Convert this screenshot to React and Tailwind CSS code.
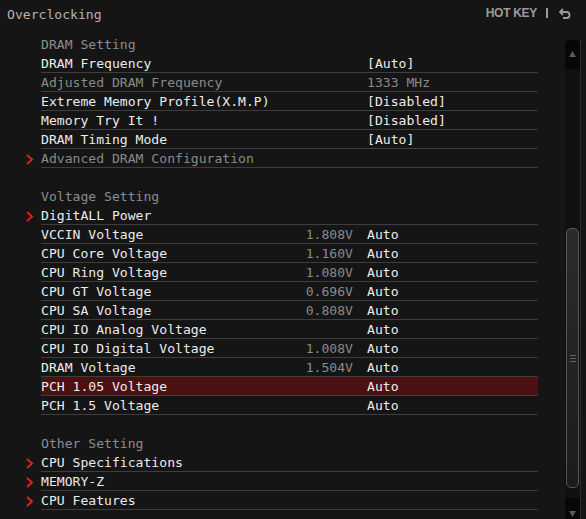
import React from "react";

const mono = { fontFamily: '"DejaVu Sans Mono", "Liberation Mono", monospace' };

function Arrow() {
  return (
    <svg width="8" height="11" viewBox="0 0 8 11" className="block">
      <path d="M1 1 L6 5.5 L1 10" fill="none" stroke="#e0201c" strokeWidth="2" />
    </svg>
  );
}

const rows = [
  { t: "title", label: "DRAM Setting" },
  { label: "DRAM Frequency", val: "[Auto]" },
  { label: "Adjusted DRAM Frequency", val: "1333 MHz", dim: true },
  { label: "Extreme Memory Profile(X.M.P)", val: "[Disabled]" },
  { label: "Memory Try It !", val: "[Disabled]" },
  { label: "DRAM Timing Mode", val: "[Auto]" },
  { label: "Advanced DRAM Configuration", dim: true, arrow: true },
  { t: "blank" },
  { t: "title", label: "Voltage Setting" },
  { label: "DigitALL Power", arrow: true },
  { label: "VCCIN Voltage", num: "1.808V", val: "Auto" },
  { label: "CPU Core Voltage", num: "1.160V", val: "Auto" },
  { label: "CPU Ring Voltage", num: "1.080V", val: "Auto" },
  { label: "CPU GT Voltage", num: "0.696V", val: "Auto" },
  { label: "CPU SA Voltage", num: "0.808V", val: "Auto" },
  { label: "CPU IO Analog Voltage", num: "", val: "Auto" },
  { label: "CPU IO Digital Voltage", num: "1.008V", val: "Auto" },
  { label: "DRAM Voltage", num: "1.504V", val: "Auto" },
  { label: "PCH 1.05 Voltage", num: "", val: "Auto", sel: true },
  { label: "PCH 1.5 Voltage", num: "", val: "Auto" },
  { t: "blank" },
  { t: "title", label: "Other Setting" },
  { label: "CPU Specifications", arrow: true },
  { label: "MEMORY-Z", arrow: true },
  { label: "CPU Features", arrow: true },
];

function Row({ r }) {
  if (r.t === "blank") return <div className="h-[19px]" />;
  if (r.t === "title")
    return (
      <div className="h-[19px] flex items-center pt-[1px] pl-[41px] text-[#8c8c8c]">{r.label}</div>
    );
  return (
    <div className="h-[19px] flex items-stretch">
      <div className="w-[41px] flex items-center justify-start pl-[26px] pt-[1px]">
        {r.arrow ? <Arrow /> : null}
      </div>
      <div
        className={`w-[497px] flex items-center pt-[1px] border-b border-[#3d3d3d] ${
          r.sel ? "bg-[#4c1012] border-t border-t-[#3d3d3d] -mt-px" : ""
        }`}
      >
        <div className={`w-[262px] ${r.dim ? "text-[#8a8a8a]" : "text-[#ececec]"}`}>{r.label}</div>
        <div className="w-[50px] text-right text-[#8a8a8a]">{r.num || ""}</div>
        <div className={`pl-[14px] ${r.dim ? "text-[#8a8a8a]" : "text-[#ececec]"}`}>{r.val || ""}</div>
      </div>
    </div>
  );
}

function Scrollbar() {
  return (
    <div className="w-[16px] mt-[40px] flex">
      <div className="w-[15px] flex flex-col bg-[#101010] rounded-t-[5px]">
        <div className="h-[29px] bg-[#070707] rounded-t-[5px] flex justify-center pt-[11px]">
          <svg width="7" height="6" viewBox="0 0 7 6"><path d="M3.5 0 L7 6 L0 6 Z" fill="#5a5a5a" /></svg>
        </div>
        <div className="h-[159px]" />
        <div className="h-[260px] mx-[1px] rounded-[5px] border border-[#555] bg-gradient-to-b from-[#2c2c2c] to-[#1c1c1c] flex flex-col items-center justify-center gap-[2px]">
          <div className="w-[6px] h-px bg-[#606060]" />
          <div className="w-[6px] h-px bg-[#606060]" />
          <div className="w-[6px] h-px bg-[#606060]" />
        </div>
        <div className="h-[10px]" />
        <div className="flex-1 bg-[#070707] flex justify-center pt-[13px]">
          <svg width="7" height="6" viewBox="0 0 7 6"><path d="M0 0 L7 0 L3.5 6 Z" fill="#5a5a5a" /></svg>
        </div>
      </div>
      <div className="w-px bg-[#2c2c2c]" />
    </div>
  );
}

export default function App() {
  return (
    <div className="w-[586px] h-[519px] bg-[#151515] overflow-hidden relative flex flex-col" style={mono}>
      <div className="h-[34px] shrink-0 flex items-start">
        <div className="pl-[7px] pt-[5px] text-[13.1px] text-[#b4b4b4]">Overclocking</div>
        <div className="ml-auto flex items-center pt-[4px] pr-[15px] gap-[9px] text-[#9b9b9b]" style={{ fontFamily: '"Liberation Sans", Arial, sans-serif' }}>
          <span className="text-[12px] font-bold tracking-[-0.3px]">HOT KEY</span>
          <span className="w-[2px] h-[10px] bg-[#9b9b9b]" />
          <svg width="12" height="11" viewBox="0 0 12 11" className="ml-[2px]">
            <path d="M4 1 L1 4 L4 7" fill="none" stroke="#9b9b9b" strokeWidth="1.8" />
            <path d="M1.5 4 H7.5 A3 3 0 0 1 7.5 10 H4" fill="none" stroke="#9b9b9b" strokeWidth="1.8" />
          </svg>
        </div>
      </div>
      <div className="flex flex-1 -mt-[34px]">
        <div className="w-[565px] pt-[34px] text-[13.1px] leading-none">
          <div className="pt-[1px]">
            {rows.map((r, i) => (
              <Row key={i} r={r} />
            ))}
          </div>
        </div>
        <Scrollbar />
      </div>
    </div>
  );
}
